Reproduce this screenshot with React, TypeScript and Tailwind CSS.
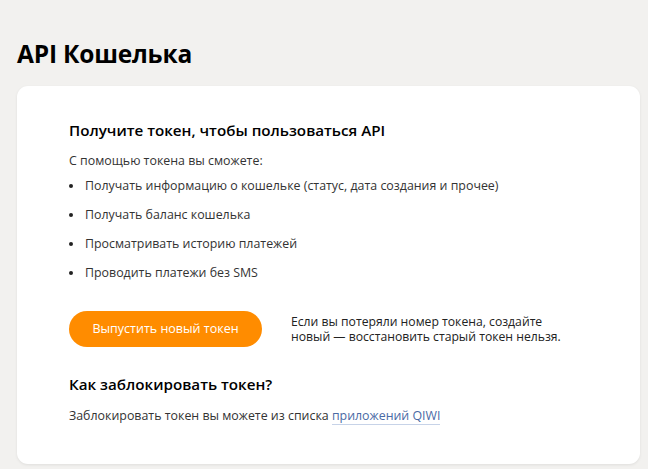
import React from "react";

export default function App() {
  const items = [
    "Получать информацию о кошельке (статус, дата создания и прочее)",
    "Получать баланс кошелька",
    "Просматривать историю платежей",
    "Проводить платежи без SMS",
  ];
  return (
    <div
      className="min-h-screen bg-[#f2f1ef] px-[17px] pt-[38px] text-[#222]"
      style={{ fontFamily: '"Open Sans", "Noto Sans", sans-serif' }}
    >
      <h1 className="text-[24.5px] font-bold leading-[32px] text-black tracking-[-0.2px]">API Кошелька</h1>
      <div className="mt-[16px] w-[623px] rounded-[11px] bg-white pl-[52px] pt-[34px] pb-[40px] shadow-[0_1px_3px_rgba(0,0,0,0.08)]">
        <h2 className="text-[15.2px] font-semibold leading-[20px] text-black">Получите токен, чтобы пользоваться API</h2>
        <p className="mt-[13px] text-[12.4px] leading-[16px] text-[#333]">С помощью токена вы сможете:</p>
        <ul className="mt-[9px] flex flex-col gap-[13px]">
          {items.map((t) => (
            <li key={t} className="flex items-center text-[12.4px] leading-[16px] text-[#333]">
              <span className="mr-[12px] inline-block h-[4px] w-[4px] rounded-full bg-[#222]" />
              {t}
            </li>
          ))}
        </ul>
        <div className="mt-[30px] flex items-center">
          <button className="h-[36px] w-[193px] rounded-full bg-[#ff8c00] text-[12.5px] font-medium text-white">
            Выпустить новый токен
          </button>
          <p className="ml-[29px] text-[12.2px] leading-[15px] text-[#222]">
            Если вы потеряли номер токена, создайте
            <br />
            новый — восстановить старый токен нельзя.
          </p>
        </div>
        <h2 className="mt-[27px] text-[15.2px] font-semibold leading-[20px] text-black">Как заблокировать токен?</h2>
        <p className="mt-[14px] text-[12.4px] leading-[16px] text-[#333]">
          Заблокировать токен вы можете из списка{" "}
          <a className="border-b border-[#c7d3e8] text-[#4a6aa5]">приложений QIWI</a>
        </p>
      </div>
    </div>
  );
}
